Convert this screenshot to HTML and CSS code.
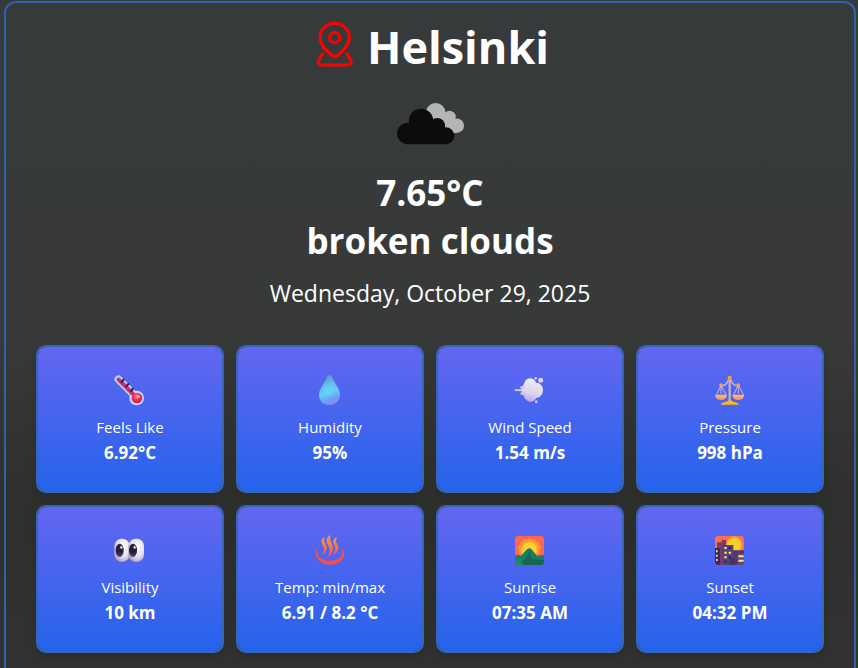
FILE: index.html
```html
<!DOCTYPE html>
<html lang="en">
<head>
<meta charset="utf-8">
<meta name="viewport" content="width=device-width, initial-scale=1">
<title>Weather in Helsinki</title>
<link rel="stylesheet" href="styles.css">
</head>
<body>
<main class="panel">
  <header class="summary">
    <h1 class="city">
      <svg class="pin" viewBox="0 0 48 48" fill="none" stroke="#ff0000" stroke-width="3.2" stroke-linecap="round" stroke-linejoin="round" aria-hidden="true">
        <path d="M23.7 3.300c-8 0-14.600 6.300-14.600 14.300 0 7.200 5.400 12.200 11.200 17.400 2.200 2 4.600 2 6.800 0C32.900 29.800 38.300 24.800 38.300 17.600 38.300 9.600 31.700 3.300 23.700 3.300z"/>
        <circle cx="23.7" cy="17.7" r="5"/>
        <path d="M11.300 34 7.900 40c-1.600 2.900-.2 5 2.600 5h26.400c2.800 0 4.200-2.100 2.600-5L36.100 34"/>
      </svg>
      <span>Helsinki</span>
    </h1>
    <svg class="sky" viewBox="0 3 100 95" aria-hidden="true">
      <g fill="#b5b5b5"><circle cx="55.7" cy="42" r="10"/><circle cx="69.5" cy="46" r="6.3"/><circle cx="76.7" cy="54.7" r="7.3"/><path d="M54 42h16l6 20H64L50 50z"/></g>
      <g fill="#0c0c0c"><circle cx="27.7" cy="62.5" r="10.7"/><circle cx="41" cy="50" r="12.3"/><circle cx="57.3" cy="54.8" r="7.8"/><circle cx="65.8" cy="64.800" r="8.5"/><path d="M28 52h30l8 10v11.300H27z"/></g>
    </svg>
    <p class="headline">7.65°C</p>
    <p class="headline">broken clouds</p>
    <p class="date">Wednesday, October 29, 2025</p>
  </header>

  <section class="cards" aria-label="Current conditions">
    <article class="card">
      <svg class="icon" viewBox="42 30 96 96" aria-hidden="true">
        <defs><radialGradient id="bulb" cx=".45" cy=".35" r=".65"><stop offset="0" stop-color="#ff7d92"/><stop offset=".45" stop-color="#f5335d"/><stop offset="1" stop-color="#d7164b"/></radialGradient></defs>
        <path d="M55 43 109 97" stroke="#a9d2f5" stroke-width="23" stroke-linecap="round"/>
        <circle cx="110" cy="99" r="22" fill="#b5dcf7"/>
        <path d="M56 44 108 96" stroke="#e3246c" stroke-width="12" stroke-linecap="round"/>
        <circle cx="111" cy="99" r="16" fill="url(#bulb)"/>
        <ellipse cx="115" cy="95" rx="5" ry="4" fill="#ffa1a6"/>
        <path d="m65 51 6-7m8 20 6-7m8 21 6-7" stroke="#34204d" stroke-width="6" stroke-linecap="round"/>
      </svg>
      <h2 class="label">Feels Like</h2>
      <p class="value">6.92°C</p>
    </article>
    <article class="card">
      <svg class="icon" viewBox="42 30 96 96" aria-hidden="true">
        <defs><linearGradient id="drop" x1=".35" y1="0" x2=".6" y2="1"><stop offset="0" stop-color="#6394c5"/><stop offset=".3" stop-color="#65b9ed"/><stop offset=".58" stop-color="#61cdf8"/><stop offset=".8" stop-color="#6ca1f4"/><stop offset="1" stop-color="#8e83ee"/></linearGradient></defs>
        <path d="M88 30c-4 0-6 4-8 9C72 56 57 73 57 90c0 18 13 30 31 30s32-12 32-30c0-17-15-34-23-51-2-5-5-9-9-9z" fill="url(#drop)"/>
        <ellipse cx="86" cy="76" rx="16" ry="18" fill="#72e1fb" opacity=".3"/>
      </svg>
      <h2 class="label">Humidity</h2>
      <p class="value">95%</p>
    </article>
    <article class="card">
      <svg class="icon" viewBox="42 30 96 96" aria-hidden="true">
        <defs><linearGradient id="puff" x1=".7" y1="0" x2=".35" y2="1"><stop offset="0" stop-color="#f2eff7"/><stop offset=".6" stop-color="#dcd4eb"/><stop offset="1" stop-color="#b9a1e3"/></linearGradient></defs>
        <path d="M44 73h22l-8-7q12-1 15-12c3-12 15-18 26-12 5 3 8 7 9 11 13 0 21 10 21 22s-8 23-20 24c-5 9-16 14-26 9-7-4-10-9-11-14-4-5-9-7-14-6l9-9-23-1z" fill="url(#puff)"/>
        <path d="M60 67q10 0 15-5M62 86q9-1 15 4" fill="none" stroke="#bcb0cf" stroke-width="2"/>
        <circle cx="107" cy="40" r="4" fill="#d5cceb"/><circle cx="122" cy="46" r="7.5" fill="#ddd7ed"/><circle cx="109" cy="110" r="4.5" fill="#c6b9ed"/>
      </svg>
      <h2 class="label">Wind Speed</h2>
      <p class="value">1.54 m/s</p>
    </article>
    <article class="card">
      <svg class="icon" viewBox="42 30 96 96" aria-hidden="true">
        <defs><linearGradient id="pan" x2="0" y2="1"><stop offset="0" stop-color="#ffc45b"/><stop offset="1" stop-color="#f58b6d"/></linearGradient></defs>
        <path d="M63 60 50 89M63 60l15 29M63 60v26M115 60l-14 29M115 60l15 29M115 60v26" stroke="#b7a5df" stroke-width="3.5" fill="none"/>
        <path d="M62 61q16 4 23-15h8q7 19 23 15" fill="none" stroke="#c6b0d3" stroke-width="5"/>
        <path d="M89 43v66" stroke="#c4adcb" stroke-width="7"/>
        <path d="M45 89h36q-2 16-18 16T45 89zm52 0h36q-2 16-18 16T97 89z" fill="url(#pan)"/>
        <path d="M62 119q3-7 17-9l7-4h7l7 4q14 2 17 9z" fill="#fcb719"/>
        <circle cx="89" cy="38" r="6" fill="#fba52e"/><circle cx="63" cy="60" r="5.5" fill="#fba52e"/><circle cx="115" cy="60" r="5.5" fill="#fba52e"/>
      </svg>
      <h2 class="label">Pressure</h2>
      <p class="value">998 hPa</p>
    </article>
    <article class="card">
      <svg class="icon" viewBox="42 30 96 96" aria-hidden="true">
        <defs><radialGradient id="eye" cx=".6" cy=".35" r=".75"><stop offset="0" stop-color="#fff"/><stop offset=".6" stop-color="#e2dce7"/><stop offset="1" stop-color="#9e8cac"/></radialGradient>
        <linearGradient id="iris" x2="0" y2="1"><stop offset="0" stop-color="#302637"/><stop offset=".6" stop-color="#271a37"/><stop offset="1" stop-color="#57417b"/></linearGradient></defs>
        <rect x="43" y="41" width="46" height="70" rx="22" fill="url(#eye)"/><rect x="85" y="41" width="47" height="70" rx="22" fill="url(#eye)"/>
        <ellipse cx="59" cy="76" rx="12" ry="20" fill="url(#iris)"/><ellipse cx="99" cy="76" rx="12" ry="20" fill="url(#iris)"/>
        <ellipse cx="64" cy="67" rx="3.5" ry="5" fill="#d9cfdf"/><ellipse cx="104" cy="67" rx="3.5" ry="5" fill="#d9cfdf"/>
      </svg>
      <h2 class="label">Visibility</h2>
      <p class="value">10 km</p>
    </article>
    <article class="card">
      <svg class="icon" viewBox="42 30 96 96" aria-hidden="true">
        <defs><linearGradient id="steam" gradientUnits="userSpaceOnUse" x1="0" y1="32" x2="0" y2="92"><stop offset="0" stop-color="#f99b35"/><stop offset=".5" stop-color="#f97c44"/><stop offset="1" stop-color="#f64e59"/></linearGradient></defs>
        <path d="M53 67C38 91 55 119 90 119s54-28 36-52q4 18-4 29-11 11-32 11t-33-11Q49 87 53 67z" fill="#f84e4b"/>
        <path d="M71 39q-9 10-1 21 9 12-1 27 15-15 6-28-7-9-4-20zM89 33q-13 12-3 26 10 15 0 34 17-19 8-35-8-12-5-25zM108 39q-12 10-3 21 8 12-3 27 17-15 8-28-7-9-2-20z" fill="url(#steam)" stroke="url(#steam)" stroke-width="4" stroke-linejoin="round"/>
      </svg>
      <h2 class="label">Temp: min/max</h2>
      <p class="value">6.91 / 8.2 °C</p>
    </article>
    <article class="card">
      <svg class="icon" viewBox="42 30 96 96" aria-hidden="true">
        <defs><clipPath id="dawn"><rect x="45" y="33" width="87" height="87" rx="10"/></clipPath><radialGradient id="sun"><stop offset="0" stop-color="#ffd629"/><stop offset=".7" stop-color="#ffd12a"/><stop offset="1" stop-color="#ffa62c"/></radialGradient></defs>
        <g clip-path="url(#dawn)"><path fill="#fa6650" d="M45 33h87v87H45z"/>
        <path d="m88 37 7 6 9-2 4 8 9 2v9l7 7-5 8 2 9-9 6H64l-9-6 2-9-5-8 7-7v-9l9-2 4-8 9 2z" fill="#ff9139"/><circle cx="88" cy="74" r="26" fill="url(#sun)"/>
        <path d="M45 92q9-5 17 2l19-21q7-7 14 0l17 21q10-6 20-3v29H45z" fill="#168064"/>
        <path d="m90 73 2 24 8 5 32 3v15H45q38-12 45-47z" fill="#15654f"/><path d="M45 96q20 5 25 24H45z" fill="#21856a"/></g>
      </svg>
      <h2 class="label">Sunrise</h2>
      <p class="value">07:35 AM</p>
    </article>
    <article class="card">
      <svg class="icon" viewBox="42 30 96 96" aria-hidden="true">
        <defs><clipPath id="dusk"><rect x="45" y="33" width="87" height="87" rx="10"/></clipPath></defs>
        <g clip-path="url(#dusk)"><path fill="#fa7050" d="M45 33h87v87H45z"/>
        <circle cx="103" cy="59" r="25" fill="#ff9739"/><circle cx="103" cy="59" r="21" fill="#ffcd2b"/>
        <path d="M51 52h14v-7h13v75H51z" fill="#7a3c67"/><path d="M98 76h34v44H98z" fill="#54366d"/>
        <path d="M45 69h15v51H45z" fill="#3b2b5a"/><path d="M67 60h33v60H67z" fill="#56417c"/><path d="M88 99h16v21H88z" fill="#493365"/><path d="M112 85h20v35h-20z" fill="#60477f"/>
        <path d="M48 76h5v6h-5zm0 13h5v6h-5zm0 13h5v6h-5zM73 66h7v6h-7zm0 14h7v6h-7zm13 0h7v6h-7zm-13 14h7v6h-7zM115 91h16v6h-16zm0 13h16v6h-16z" fill="#ffe17d"/>
        <path d="M86 66h7v6h-7zm0 28h7v6h-7zm-13 13h7v6h-7z" fill="#30264c"/></g>
      </svg>
      <h2 class="label">Sunset</h2>
      <p class="value">04:32 PM</p>
    </article>
  </section>
</main>
</body>
</html>
```
FILE: styles.css
```css
* {
  box-sizing: border-box;
}

body {
  margin: 0;
  padding: 1px 2px 0 4px;
  background: linear-gradient(#373a3b, #383a39 50%, #2e302e 75%, #303331);
  color: #fff;
  font-family: "Segoe UI", "Open Sans", "Noto Sans", sans-serif;
}

h1,
h2,
p {
  margin: 0;
}

.panel {
  min-height: calc(100vh - 1px);
  padding: 17px 30px 14px;
  border: 2px solid #3162a9;
  border-bottom: 0;
  border-radius: 12px 12px 0 0;
}

.summary {
  display: flex;
  flex-direction: column;
  align-items: center;
  text-align: center;
}

.city {
  display: flex;
  align-items: flex-start;
  gap: 8px;
  font-size: 45px;
  line-height: 54px;
  font-weight: 700;
}

.pin {
  width: 48px;
  height: 48px;
}

.sky {
  width: 100px;
  height: 95px;
}

.headline {
  font-size: 35px;
  line-height: 48px;
  font-weight: 700;
}

.date {
  margin-top: 12px;
  font-size: 23px;
  line-height: 32px;
}

.cards {
  display: grid;
  grid-template-columns: repeat(4, 1fr);
  gap: 12px;
  margin-top: 36px;
}

.card {
  display: flex;
  flex-direction: column;
  align-items: center;
  padding: 24px 8px;
  border: 2px solid #3567b5;
  border-radius: 10px;
  background: linear-gradient(#6366f1, #2563eb) padding-box;
  box-shadow: 0 4px 10px rgba(0, 0, 0, 0.15);
  text-align: center;
}

.icon {
  width: 32px;
  height: 32px;
  margin: 4px 0 8px;
}

.label {
  font-size: 15px;
  line-height: 24px;
  font-weight: 400;
}

.value {
  font-size: 17px;
  line-height: 28px;
  font-weight: 700;
}
```
